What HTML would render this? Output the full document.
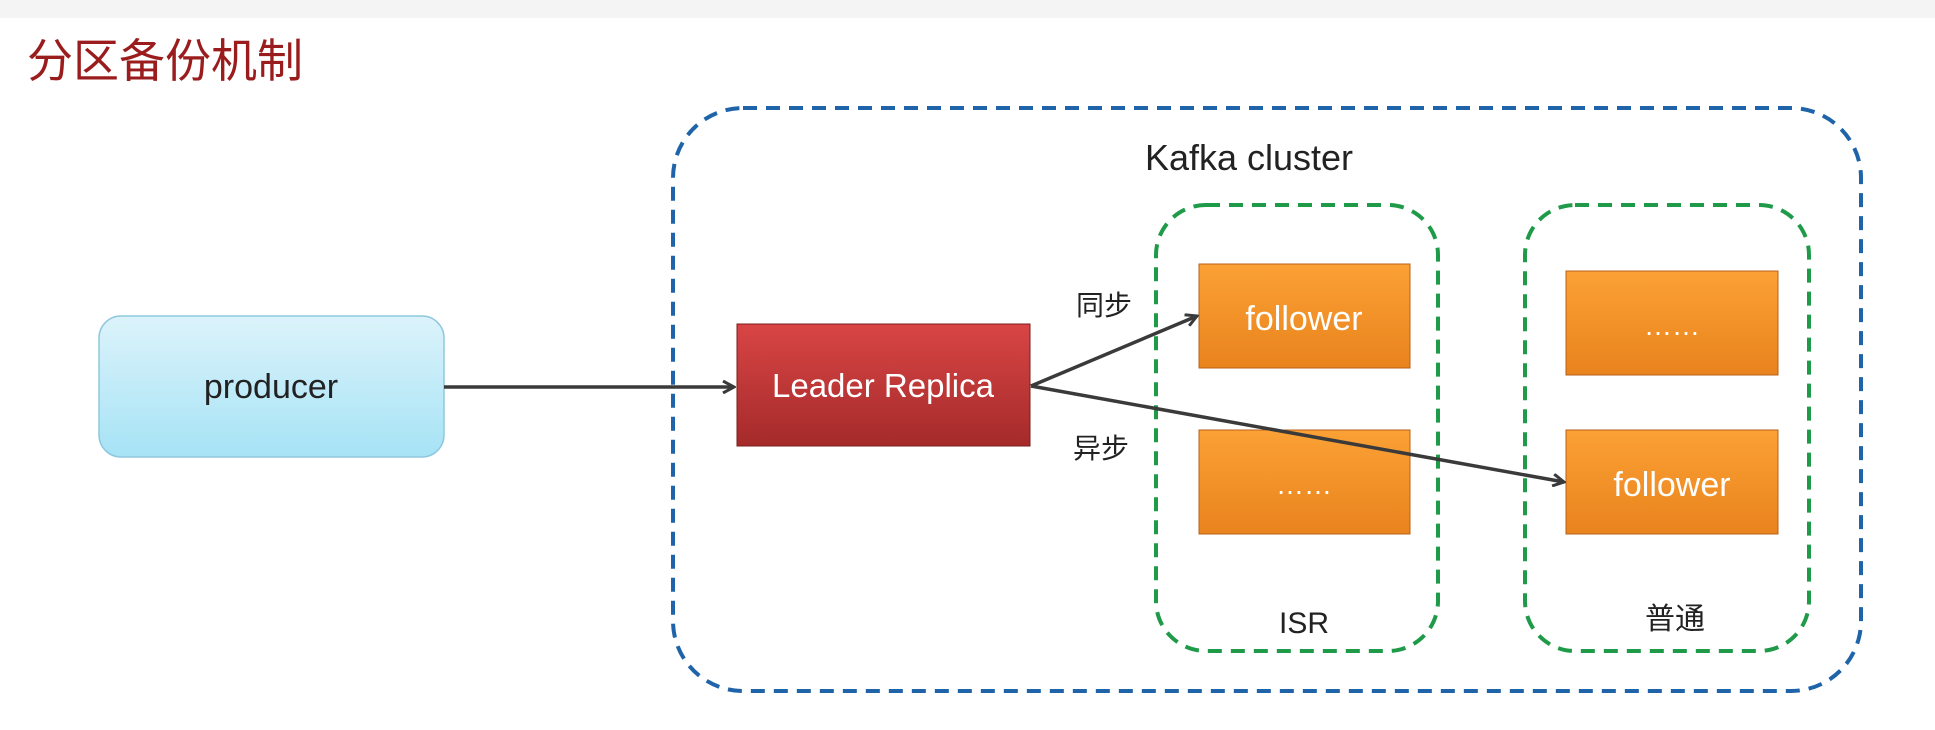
<!DOCTYPE html>
<html><head><meta charset="utf-8"><style>
html,body{margin:0;padding:0;background:#fff;width:1935px;height:730px;overflow:hidden}
svg{display:block}
text{font-family:"Liberation Sans","Noto Sans CJK SC",sans-serif}
</style></head><body>
<svg width="1935" height="730" viewBox="0 0 1935 730" xmlns="http://www.w3.org/2000/svg">
<defs>
<linearGradient id="gb" x1="0" y1="0" x2="0" y2="1"><stop offset="0" stop-color="#dcf3fb"/><stop offset="1" stop-color="#a6e3f5"/></linearGradient>
<linearGradient id="gr" x1="0" y1="0" x2="0" y2="1"><stop offset="0" stop-color="#d94545"/><stop offset="1" stop-color="#a52a2a"/></linearGradient>
<linearGradient id="go" x1="0" y1="0" x2="0" y2="1"><stop offset="0" stop-color="#fba135"/><stop offset="1" stop-color="#e9831d"/></linearGradient>
<marker id="ar" markerWidth="14" markerHeight="14" refX="12" refY="7" orient="auto" markerUnits="userSpaceOnUse"><path d="M1,1 L12,7 L1,13" fill="none" stroke="#3a3a3a" stroke-width="3"/></marker>
</defs>
<rect x="0" y="0" width="1935" height="18" fill="#f4f4f4"/>
<text x="27" y="77" font-size="46" fill="#9a1c1c">分区备份机制</text>
<rect x="673" y="108" width="1188" height="583" rx="70" fill="none" stroke="#1f64a8" stroke-width="4" stroke-dasharray="14 9"/>
<text x="1249" y="170" font-size="36" fill="#222" text-anchor="middle">Kafka cluster</text>
<rect x="1156" y="205" width="282" height="446" rx="50" fill="none" stroke="#1e9a48" stroke-width="4" stroke-dasharray="14 9"/>
<rect x="1525" y="205" width="284" height="446" rx="50" fill="none" stroke="#1e9a48" stroke-width="4" stroke-dasharray="14 9"/>
<rect x="99" y="316" width="345" height="141" rx="22" fill="url(#gb)" stroke="#8fc8de" stroke-width="1.5"/>
<text x="271" y="398" font-size="34" fill="#222" text-anchor="middle">producer</text>
<rect x="737" y="324" width="293" height="122" fill="url(#gr)" stroke="#7a1c1c" stroke-width="1"/>
<text x="883" y="397" font-size="33" fill="#fff" text-anchor="middle">Leader Replica</text>
<rect x="1199" y="264" width="211" height="104" fill="url(#go)" stroke="#b8621a" stroke-width="1"/>
<text x="1304" y="330" font-size="34" fill="#fff" text-anchor="middle">follower</text>
<rect x="1199" y="430" width="211" height="104" fill="url(#go)" stroke="#b8621a" stroke-width="1"/>
<text x="1304" y="494" font-size="28" fill="#fff" text-anchor="middle">……</text>
<rect x="1566" y="271" width="212" height="104" fill="url(#go)" stroke="#b8621a" stroke-width="1"/>
<text x="1672" y="335" font-size="28" fill="#fff" text-anchor="middle">……</text>
<rect x="1566" y="430" width="212" height="104" fill="url(#go)" stroke="#b8621a" stroke-width="1"/>
<text x="1672" y="496" font-size="34" fill="#fff" text-anchor="middle">follower</text>
<text x="1104" y="315" font-size="28" fill="#222" text-anchor="middle">同步</text>
<text x="1101" y="458" font-size="28" fill="#222" text-anchor="middle">异步</text>
<text x="1304" y="633" font-size="30" fill="#222" text-anchor="middle">ISR</text>
<text x="1675" y="629" font-size="30" fill="#222" text-anchor="middle">普通</text>
<line x1="444" y1="387" x2="734" y2="387" stroke="#3a3a3a" stroke-width="3.5" marker-end="url(#ar)"/>
<line x1="1031" y1="386" x2="1197" y2="316" stroke="#3a3a3a" stroke-width="3.5" marker-end="url(#ar)"/>
<line x1="1031" y1="386" x2="1564" y2="482" stroke="#3a3a3a" stroke-width="3.5" marker-end="url(#ar)"/>
</svg>
</body></html>
